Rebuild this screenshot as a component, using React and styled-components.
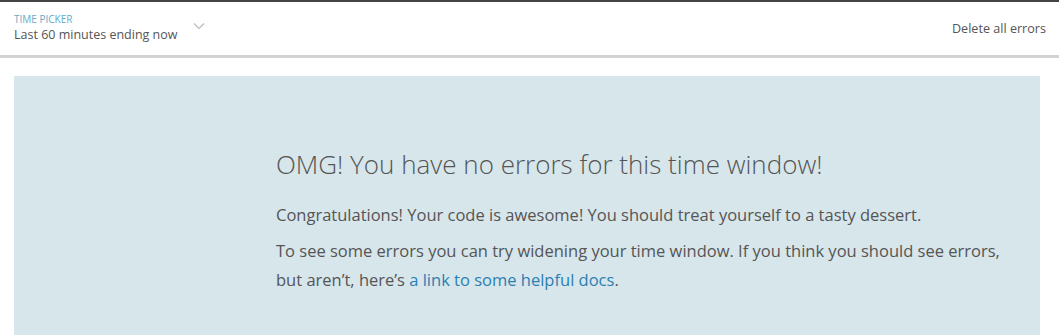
import React from "react";
import styled, { createGlobalStyle } from "styled-components";

const GlobalStyle = createGlobalStyle`
  body {
    margin: 0;
    background: #fff;
    font-family: "Open Sans", "Liberation Sans", sans-serif;
    color: #555;
  }
`;

const Header = styled.header`
  display: flex;
  align-items: center;
  justify-content: space-between;
  height: 53px;
  padding: 0 14px;
  border-top: 2px solid #444;
  border-bottom: 3px solid #d2d2d2;
`;

const Picker = styled.div`
  display: flex;
  align-items: center;
  gap: 16px;
  cursor: pointer;
`;

const PickerText = styled.div`
  display: flex;
  flex-direction: column;
  margin-top: -2px;
`;

const PickerLabel = styled.span`
  font-size: 10px;
  line-height: 14px;
  text-transform: uppercase;
  color: #62acc9;
`;

const PickerValue = styled.span`
  font-size: 12.5px;
  line-height: 18px;
  color: #555;
`;

const Chevron = styled.svg`
  width: 12px;
  height: 8px;
  margin-top: -6px;
`;

const DeleteButton = styled.button`
  background: none;
  border: 0;
  padding: 0;
  margin-right: -1px;
  font-family: inherit;
  font-size: 12.6px;
  color: #555;
  cursor: pointer;
`;

const Panel = styled.section`
  margin: 18px 19px 0 14px;
  height: 259px;
  background: #d7e6eb;
  padding: 70px 0 0 262px;
  box-sizing: border-box;
`;

const Title = styled.h1`
  margin: 0 0 18px;
  font-size: 26px;
  font-weight: 300;
  line-height: 36px;
  color: #555;
`;

const Text = styled.p`
  margin: 0 0 7px;
  max-width: 750px;
  font-size: 16.5px;
  line-height: 29px;
  color: #555;
`;

const DocsLink = styled.a`
  color: #2b7fb2;
  text-decoration: none;
`;

export default function App() {
  return (
    <>
      <GlobalStyle />
      <Header>
        <Picker>
          <PickerText>
            <PickerLabel>Time picker</PickerLabel>
            <PickerValue>Last 60 minutes ending now</PickerValue>
          </PickerText>
          <Chevron viewBox="0 0 12 8">
            <path d="M1 1.5l5 5 5-5" fill="none" stroke="#bbb" strokeWidth="1.2" />
          </Chevron>
        </Picker>
        <DeleteButton>Delete all errors</DeleteButton>
      </Header>
      <Panel>
        <Title>OMG! You have no errors for this time window!</Title>
        <Text>
          Congratulations! Your code is awesome! You should treat yourself to a tasty dessert.
        </Text>
        <Text>
          To see some errors you can try widening your time window. If you think you should see errors,
          but aren’t, here’s <DocsLink href="#">a link to some helpful docs</DocsLink>.
        </Text>
      </Panel>
    </>
  );
}
